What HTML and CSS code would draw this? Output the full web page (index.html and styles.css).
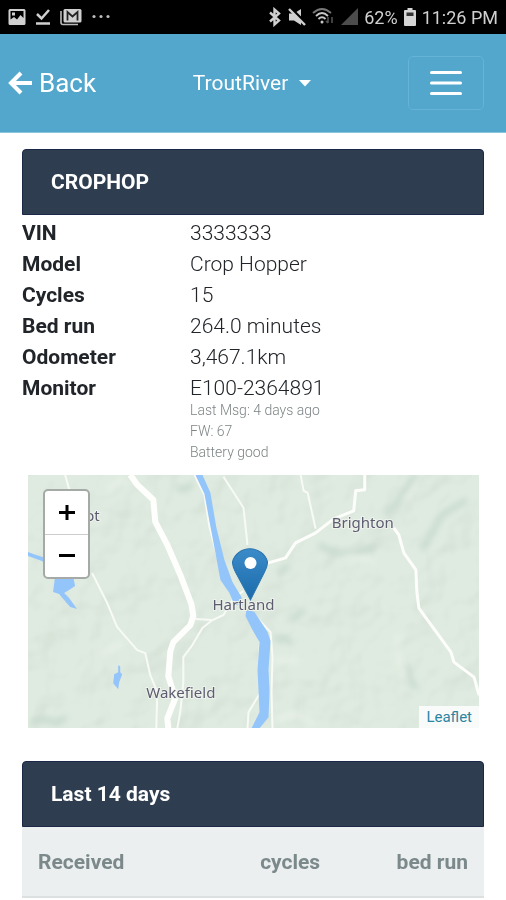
FILE: index.html
```html
<!DOCTYPE html>
<html lang="en">
<head>
<meta charset="utf-8">
<meta name="viewport" content="width=device-width, initial-scale=1">
<title>TroutRiver</title>
<link rel="stylesheet" href="styles.css">
</head>
<body>
<div class="status">
  <div class="status-group notices">
    <svg width="18" height="18" viewBox="0 0 18 18" fill="#d0d0d0" aria-hidden="true"><path fill-rule="evenodd" d="M2 1h14a1.500 1.500 0 0 1 1.500 1.500v13A1.500 1.500 0 0 1 16 17H2A1.500 1.500 0 0 1 .5 15.500v-13A1.500 1.500 0 0 1 2 1zm.5 2v8.500L6 9l3 2.500L12.500 7l3 3V3zM4 4.500h3v3H4z"/></svg>
    <svg width="16" height="18" viewBox="0 0 16 18" fill="none" stroke="#d0d0d0" aria-hidden="true"><path d="M2 6l4.500 4.500L14 2" stroke-width="2.500"/><path d="M1 15.500h14" stroke-width="2.500"/></svg>
    <svg width="22" height="18" viewBox="0 0 22 18" aria-hidden="true"><path d="M1 3v11.500a2 2 0 0 0 2 2h15" fill="none" stroke="#bbb" stroke-width="1.600"/><rect x="3.500" y="1" width="18" height="13.500" rx="1.500" fill="#d0d0d0"/><path d="M7.500 12.500V4l5 4.500 5-4.500v8.500" fill="none" stroke="#222" stroke-width="1.800"/></svg>
    <svg width="20" height="18" viewBox="0 0 20 18" fill="#bbb" aria-hidden="true"><circle cx="3" cy="8.500" r="1.600"/><circle cx="10" cy="8.500" r="1.600"/><circle cx="17" cy="8.500" r="1.600"/></svg>
  </div>
  <div class="status-group">
    <svg width="14" height="20" viewBox="0 0 14 20" fill="none" stroke="#d0d0d0" stroke-width="2.400" aria-hidden="true"><path d="M2 5.500l9 8-4.500 4V2.500L11 6.500l-9 8"/></svg>
    <svg width="18" height="20" viewBox="0 0 18 20" aria-hidden="true"><path d="M1 6.500h5l7-4.500v16L6 13.500H1z" fill="#d0d0d0"/><path d="M2 .5l16 16" stroke="#000" stroke-width="3"/><path d="M1 2l16 16" stroke="#d0d0d0" stroke-width="2.400"/></svg>
    <svg width="22" height="20" viewBox="0 0 22 20" fill="none" stroke="#c8c8c8" stroke-width="1.800" aria-hidden="true"><path d="M1 6q9-8 18 0" stroke="#777"/><path d="M4 9q6-6 12 0M6.500 12q3.500-3.500 7 0"/><circle cx="10" cy="15" r="1.500" fill="#c8c8c8" stroke="none"/><path d="M16 10v6m-2-2l2 2 M20 16v-6" stroke="#555" stroke-width="1.500"/></svg>
    <svg width="18" height="18" viewBox="0 0 18 18" aria-hidden="true"><path d="M18 0v17H1z" fill="#4c4c4c"/></svg>
    <span>62%</span>
    <svg width="12" height="18" viewBox="0 0 12 18" aria-hidden="true"><path d="M3.500 0h5v2H11a1 1 0 0 1 1 1v14a1 1 0 0 1-1 1H1a1 1 0 0 1-1-1V3a1 1 0 0 1 1-1h2.500z" fill="#d5d5d5"/><path d="M2.500 4.500h7V8h-7z" fill="#333"/></svg>
    <span>11:26 PM</span>
  </div>
</div>

<header class="navbar">
  <a class="back" href="#"><svg width="24" height="24" viewBox="0 0 24 24" fill="none" stroke="#fff" stroke-width="4" aria-hidden="true"><path d="M13 2L3 12l10 10M3 12h21"/></svg><span>Back</span></a>
  <button class="account" type="button">TroutRiver<svg width="12" height="7" viewBox="0 0 12 7" fill="#fff" aria-hidden="true"><path d="M0 0h12L6 6.500z"/></svg></button>
  <button class="menu" type="button" aria-label="Menu"><svg width="32" height="26" viewBox="0 0 32 26" stroke="#fff" stroke-width="3" stroke-linecap="round" aria-hidden="true"><path d="M1.500 2.500h29M1.500 13h29M1.500 23.500h29"/></svg></button>
</header>

<main>
  <section>
    <h2 class="card-title">CROPHOP</h2>
    <dl class="details">
      <dt>VIN</dt><dd>3333333</dd>
      <dt>Model</dt><dd>Crop Hopper</dd>
      <dt>Cycles</dt><dd>15</dd>
      <dt>Bed run</dt><dd>264.0 minutes</dd>
      <dt>Odometer</dt><dd>3,467.1km</dd>
      <dt>Monitor</dt><dd>E100-2364891
        <ul class="notes"><li>Last Msg: 4 days ago</li><li>FW: 67</li><li>Battery good</li></ul></dd>
    </dl>
    <div class="map">
      <svg class="tiles" viewBox="0 0 450 253" preserveAspectRatio="xMidYMid slice" role="img" aria-label="Map of Hartland">
        <defs>
          <filter id="relief" x="0" y="0" width="100%" height="100%">
            <feTurbulence type="fractalNoise" baseFrequency="0.022" numOctaves="3" seed="8"/>
            <feDiffuseLighting lighting-color="#fff" surfaceScale="7" diffuseConstant="1.100"><feDistantLight azimuth="225" elevation="60"/></feDiffuseLighting>
          </filter>
          <filter id="soft"><feGaussianBlur stdDeviation="3"/></filter>
          <linearGradient id="pin" x1="0" y1="0" x2="0" y2="1"><stop offset="0" stop-color="#3c8bc9"/><stop offset="1" stop-color="#1a6bab"/></linearGradient>
        </defs>
        <rect width="450" height="253" fill="#dfebe0"/>
        <rect class="relief" width="450" height="253" filter="url(#relief)"/>
        <g fill="none" stroke="#c5d8cb" stroke-width="5" filter="url(#soft)">
          <path d="M148 12q8 6 16-3M290 70q25 16 55 2M358 40q18-20 28-40M393 75l20-35 25-15M245 165q12-6 18 4M262 145l14-10M380 190q-2 15 8 23M3 248q15-7 25 0l10-6M250 98l10-8"/>
        </g>
        <g fill="none" stroke="#eaf2e9" stroke-width="4" filter="url(#soft)">
          <path d="M80 15l18-12M245 185h25M248 245q18-12 38 4M315 82q15 0 30 4M370 160l-2 20 8 25M70 180l25-12M376 25l14-18"/>
        </g>
        <g fill="none" stroke="#f8faf6" stroke-width="2" stroke-linejoin="round">
          <path d="M37 0l5 18M64 98l15 30 10 24 20 23 8 3 5 22 7 17-1 36"/>
          <path d="M195 2l20 31 4 37"/>
          <path d="M272 0l3 16 4 2 8 36"/>
          <path d="M167 144l17 1 11-5 11-18 9-6M184 145l-10 8-10 17-9 12v25l-3 29-3 17"/>
          <path d="M222 136l20 21 2 25-1 35 1 36M232 157l-1 20 1 40-12 20-1 16"/>
          <path d="M166 0l10 20 5 32 10 38 8 18"/>
        </g>
        <g fill="none" stroke="#fdfefb" stroke-width="3" stroke-linejoin="round">
          <path d="M222 94l18-6 17-5 10-15 20-10 18-14 20-8 2-20 9-1V0"/>
          <path d="M365 53l5 7 5 18 12 17 1 22 2 16 32 44 3 10 20 15 5 18"/>
        </g>
        <path d="M102 0l7 10 16 15 2 22 12 23 13 30 11 29 2 12-3 9-17 17-3 9-2 25 7 22-8 20 1 10" fill="none" stroke="#fefffd" stroke-width="6" stroke-linejoin="round"/>
        <g fill="#94c5fa">
          <path d="M167 0h7l8 18 6 35 8 32 8 22 9 15 1 8-8 0-5-12-9-13-8-43-8-43z"/>
          <path d="M218 134l8 3 13 20 3 9-2 28 1 23-1 25-9 11h-8l8-16-1-22-1-20 2-28-7-12-7-14z"/>
          <path d="M0 77l8 3 10 3 5 12-9-9-14-5zM27 102l18-1 2 10-6 4-5 3 5 5 8 11-7-2-11-13-6-2zM90 190l2 1v6l2 2-3 8-1 7-5-6 1-9 4-2z"/>
        </g>
        <g class="places">
          <text x="57" y="46">ot</text>
          <text x="303" y="53">Brighton</text>
          <text x="184" y="135">Hartland</text>
          <text x="118" y="223">Wakefield</text>
        </g>
        <path d="M222 125L207 97Q204 91 204 87a18 17 0 0 1 35 0q0 4-3 10z" fill="url(#pin)" stroke="#2b75b1" stroke-width="1"/>
        <circle cx="222" cy="88" r="6" fill="#fff"/>
      </svg>
      <div class="zoom"><button type="button" aria-label="Zoom in"><svg width="16" height="16" viewBox="0 0 16 16" stroke="#000" stroke-width="3" aria-hidden="true"><path d="M8 0v15M0 7.500h16"/></svg></button><button type="button" aria-label="Zoom out"><svg width="16" height="16" viewBox="0 0 16 16" stroke="#000" stroke-width="3" aria-hidden="true"><path d="M0 7.500h16"/></svg></button></div>
      <a class="credit" href="#">Leaflet</a>
    </div>
  </section>

  <section>
    <h2 class="card-title">Last 14 days</h2>
    <table class="history">
      <thead><tr><th class="received">Received</th><th class="cycles">cycles</th><th>bed run</th></tr></thead>
    </table>
  </section>
</main>
</body>
</html>
```
FILE: styles.css
```css
* { box-sizing: border-box; }
body {
  margin: 0;
  background: #fff;
  color: #212529;
  font-family: Roboto, "Liberation Sans", sans-serif;
  font-size: 21px;
}
button { font: inherit; color: inherit; background: none; border: 0; padding: 0; }
a { text-decoration: none; }
svg { display: block; flex: none; }

.status {
  display: flex;
  justify-content: space-between;
  align-items: center;
  height: 34px;
  padding: 0 8px;
  background: #000;
  color: #d0d0d0;
  font-size: 18px;
}
.status-group { display: flex; align-items: center; gap: 6px; }
.notices { gap: 9px; }

.navbar {
  display: flex;
  justify-content: space-between;
  align-items: center;
  height: 99px;
  padding: 0 22px 0 8px;
  background: #53a7cd;
  border-bottom: 1px solid #8cc4de;
  color: #fff;
}
.back { display: flex; align-items: center; gap: 7px; color: #fff; font-size: 26px; }
.account { display: flex; align-items: center; gap: 11px; }
.menu {
  display: flex;
  align-items: center;
  justify-content: center;
  width: 76px;
  height: 54px;
  border: 1px solid #65b3d7;
  border-radius: 5px;
}

main { padding: 16px 22px 0; }
.card-title {
  margin: 0;
  padding: 0 28px;
  border: 1px solid #1a2747;
  border-radius: 4px 4px 0 0;
  background: #2e3e50;
  color: #fff;
  font-size: 21px;
  font-weight: 700;
  line-height: 64px;
}
.details {
  display: grid;
  grid-template-columns: 168px 1fr;
  margin: 3px 0 12px;
  line-height: 31px;
}
dt { font-weight: 700; }
dd { margin: 0; font-weight: 300; }
.notes {
  margin: -4px 0 0;
  padding: 0;
  list-style: none;
  color: #7d8486;
  font-size: 14px;
  line-height: 21px;
}

.map { position: relative; margin: 0 5px 33px 6px; }
.tiles { width: 100%; height: 253px; }
.relief { opacity: 0.2; mix-blend-mode: multiply; }
.places {
  fill: #5d5b70;
  stroke: #eef3ec;
  stroke-width: 2px;
  paint-order: stroke;
  font-family: "Noto Sans", sans-serif;
  font-size: 15px;
}
.zoom {
  position: absolute;
  top: 14px;
  left: 15px;
  width: 47px;
  border: 2px solid #a5aaa6;
  border-radius: 5px;
  background: #fff;
}
.zoom button { display: flex; align-items: center; justify-content: center; width: 100%; height: 43px; }
.zoom button + button { border-top: 1px solid #ccc; }
.credit {
  position: absolute;
  right: 0;
  bottom: 0;
  padding: 0 7px;
  background: #f8fbf9;
  color: #2a85a3;
  font-size: 15px;
  line-height: 22px;
}

.history { width: 100%; border-collapse: collapse; background: #ebeff0; }
.history th {
  height: 70px;
  padding: 0 16px;
  border-bottom: 2px solid #dce0e1;
  color: #7c898b;
  font-weight: 700;
  text-align: right;
}
.history .received { width: 40%; text-align: left; }
.history .cycles { width: 28%; }
```
